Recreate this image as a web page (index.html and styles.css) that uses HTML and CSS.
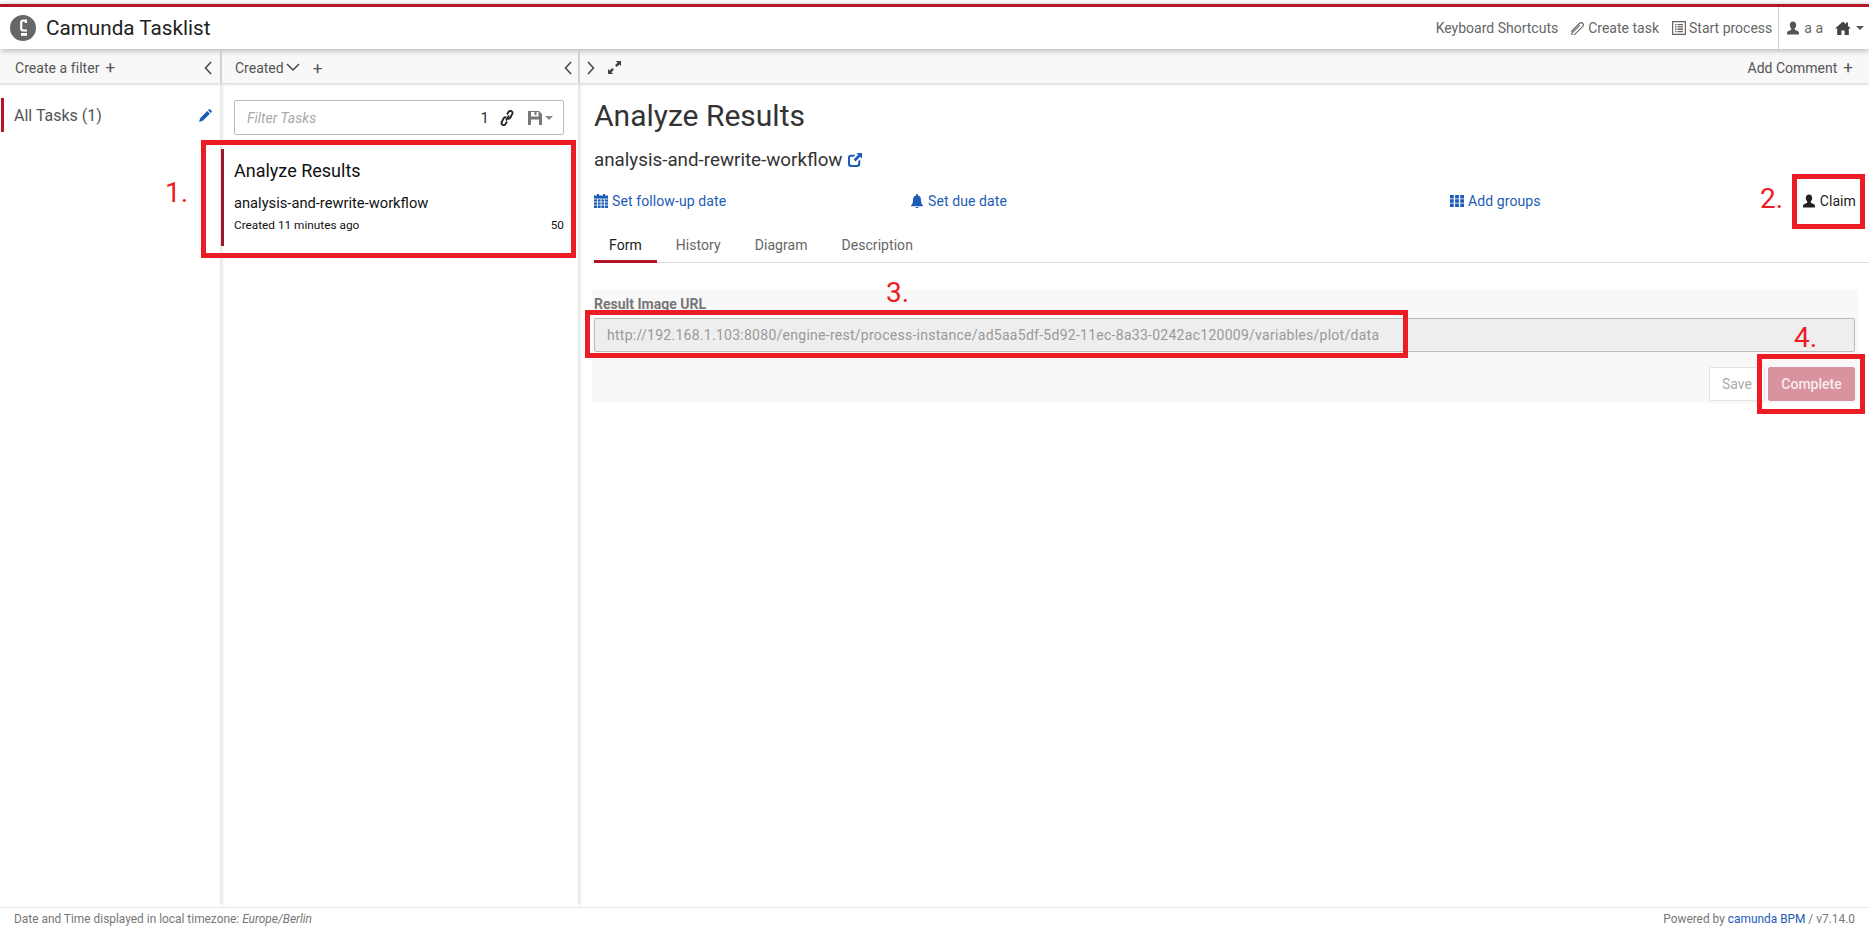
FILE: index.html
```html
<!doctype html>
<html>
	<head>
		<meta charset="utf-8">
		<title>Camunda Tasklist</title>
		<link rel="stylesheet" href="styles.css">
	</head>
	<body>
		<svg class="icon-defs" width="0" height="0">
			<symbol id="i-user" viewBox="0 0 14 14"><path d="M7 .5c2 0 3.200 1.500 3.200 3.600 0 1.400-.6 2.700-1.400 3.500v1.200l3.200 1.400c.8.400 1 1.200 1 3.300H1c0-2.100.2-2.900 1-3.300l3.200-1.400V7.600C4.400 6.800 3.800 5.500 3.800 4.100 3.800 2 5 .5 7 .5z"/></symbol>
			<symbol id="i-home" viewBox="0 0 16 14"><path d="M8 .5l3 2.700V1.500h2v3.500l3 2.600h-2.200V14H9.600V9.500H6.400V14H2.200V7.600H0z"/></symbol>
			<symbol id="i-clip" viewBox="0 0 14 14"><g transform="rotate(45 7 7)"><path d="M4.800 14.500V2.500a2.200 2.200 0 0 1 4.400 0v12a1.400 1.400 0 0 1-2.800 0V4" fill="none" stroke="currentColor" stroke-width="1.100"/></g></symbol>
			<symbol id="i-list" viewBox="0 0 14 14"><path fill-rule="evenodd" d="M0 0h14v14H0zM1.200 1.200v11.600h11.600V1.200zM3 3h1.500v1.300H3zm2.500 0H11v1.300H5.500zM3 5.300h1.500v1.300H3zm2.500 0H11v1.300H5.500zM3 7.600h1.500v1.300H3zm2.500 0H11v1.300H5.500zM3 9.900h1.500v1.300H3zm2.500 0H11v1.300H5.500z"/></symbol>
			<symbol id="i-pencil" viewBox="0 0 14 14"><path d="M10.700.8l2.500 2.500-1.300 1.300-2.500-2.500zM8.600 2.900l2.500 2.500-6.600 6.600-3.500 1 1-3.500z"/></symbol>
			<symbol id="i-link" viewBox="0 0 14 16"><path d="M6 10.500l3-5" fill="none" stroke="#222" stroke-width="1.800"/><path d="M7 4.500l1.500-2.500c.8-1.200 2-1.400 3-.8s1.300 1.800.6 3L10.500 7.500c-.7 1.200-1.800 1.400-2.800.9M7 11.500l-1.500 2.500c-.8 1.200-2 1.400-3 .8s-1.300-1.800-.6-3L3.500 8.500c.7-1.200 1.800-1.400 2.800-.9" fill="none" stroke="#222" stroke-width="1.800"/></symbol>
			<symbol id="i-save" viewBox="0 0 14 14"><path fill-rule="evenodd" d="M0 0h11l3 3v11H0zM3 1v4.500h7.500V1h-2v3H6.500V1zM3 8.500V14h8V8.500z"/></symbol>
			<symbol id="i-share" viewBox="0 0 14 14"><path d="M8.500 0H14v5.500l-1.800-1.800L7.500 8.400 5.600 6.500l4.700-4.700z"/><path d="M3 1.800h4.500L5.700 3.800H3.400c-.9 0-1.400.5-1.400 1.400v5.400c0 .9.500 1.400 1.400 1.400h5.400c.9 0 1.400-.5 1.400-1.400V8.300l2-2V11c0 1.900-1.100 3-3 3H3c-1.900 0-3-1.100-3-3V4.800c0-1.900 1.100-3 3-3z"/></symbol>
			<symbol id="i-cal" viewBox="0 0 14 14"><path d="M3 0h2v1.500h4V0h2v1.500h3V14H0V1.500h3z"/><path d="M0 5h14M0 8h14M0 11h14M3.500 5v9M7 5v9M10.500 5v9" fill="none" stroke="#fff" stroke-width=".8"/></symbol>
			<symbol id="i-bell" viewBox="0 0 14 14"><path d="M7 0c.6 0 1 .4 1 1v.6c2 .4 3 2 3 4.400 0 3 .8 4.500 2 5.500v.8H1v-.8c1.200-1 2-2.500 2-5.500 0-2.400 1-4 3-4.400V1c0-.6.400-1 1-1zM5.500 13h3c0 .7-.6 1-1.500 1s-1.500-.3-1.500-1z"/></symbol>
			<symbol id="i-th" viewBox="0 0 14 14"><path d="M0 1h3.800v3.400H0zM5.100 1h3.800v3.400H5.100zM10.200 1H14v3.400h-3.800zM0 5.300h3.800v3.400H0zM5.100 5.300h3.800v3.400H5.100zM10.200 5.300H14v3.400h-3.800zM0 9.600h3.800V13H0zM5.100 9.600h3.800V13H5.100zM10.200 9.600H14V13h-3.800z"/></symbol>
			<symbol id="i-resize" viewBox="0 0 14 14"><path d="M8.500 0H14v5.500l-1.800-1.800-2.700 2.700-1.900-1.900 2.700-2.700zM0 14V8.500l1.800 1.800 2.700-2.700 1.900 1.900-2.700 2.700L5.500 14z"/></symbol>
		</svg>

		<div class="app">
			<header class="topbar">
				<div class="brand">
					<svg class="logo" viewBox="0 0 26 26"><circle cx="13" cy="13" r="13" fill="#666"/><path d="M17 5.500h-3.500c-1.500 0-2.300.7-2.300 2v6c0 1.300.8 2 2.300 2H17M15.800 5.500v2.500" fill="none" stroke="#fff" stroke-width="2.200"/><rect x="11" y="18" width="6" height="2.800" fill="#fff"/></svg>
					<span class="brand-name">Camunda Tasklist</span>
				</div>
				<nav class="topnav">
					<a class="nav-shortcuts">Keyboard Shortcuts</a>
					<a class="nav-create"><svg class="ico"><use href="#i-clip"/></svg>Create task</a>
					<a class="nav-start"><svg class="ico"><use href="#i-list"/></svg>Start process</a>
					<a class="nav-user"><svg class="ico"><use href="#i-user"/></svg>a a</a>
					<a class="nav-home"><svg class="ico ico-home"><use href="#i-home"/></svg><i class="caret"></i></a>
				</nav>
			</header>

			<main class="columns">
				<section class="col col-filters">
					<div class="toolbar">
						<span class="filter-add">Create a filter<b class="plus">+</b></span>
						<svg class="chev" viewBox="0 0 8 14"><path d="M7 1L1.500 7 7 13"/></svg>
					</div>
					<div class="filter-item">
						<span>All Tasks (1)</span>
						<svg class="ico ico-pencil"><use href="#i-pencil"/></svg>
					</div>
				</section>

				<section class="col col-list">
					<div class="toolbar">
						<span class="sort">Created<svg class="sort-chev" viewBox="0 0 14 9"><path d="M1 1l6 6 6-6"/></svg><b class="plus plus-sort">+</b></span>
						<svg class="chev" viewBox="0 0 8 14"><path d="M7 1L1.500 7 7 13"/></svg>
					</div>
					<div class="search">
						<span class="search-ph">Filter Tasks</span>
						<span class="search-count">1</span>
						<svg class="ico ico-link"><use href="#i-link"/></svg>
						<svg class="ico ico-save"><use href="#i-save"/></svg>
						<i class="caret caret-save"></i>
					</div>
					<article class="task">
						<h3>Analyze Results</h3>
						<p class="task-proc">analysis-and-rewrite-workflow</p>
						<p class="task-meta"><span>Created 11 minutes ago</span><span>50</span></p>
					</article>
				</section>

				<section class="col col-detail">
					<div class="toolbar">
						<span class="detail-tools">
							<svg class="chev" viewBox="0 0 8 14"><path d="M1 1l5.500 6L1 13"/></svg>
							<svg class="ico ico-resize"><use href="#i-resize"/></svg>
						</span>
						<span class="add-comment">Add Comment<b class="plus">+</b></span>
					</div>
					<div class="detail">
						<h1>Analyze Results</h1>
						<h2>analysis-and-rewrite-workflow<svg class="ico ico-share"><use href="#i-share"/></svg></h2>
						<div class="actions">
							<a class="act act-follow"><svg class="ico"><use href="#i-cal"/></svg>Set follow-up date</a>
							<a class="act act-due"><svg class="ico"><use href="#i-bell"/></svg>Set due date</a>
							<a class="act act-groups"><svg class="ico"><use href="#i-th"/></svg>Add groups</a>
							<a class="claim"><svg class="ico"><use href="#i-user"/></svg>Claim</a>
						</div>
						<ul class="tabs">
							<li class="current">Form</li>
							<li>History</li>
							<li>Diagram</li>
							<li>Description</li>
						</ul>
						<form class="form">
							<label>Result Image URL</label>
							<div class="field">http://192.168.1.103:8080/engine-rest/process-instance/ad5aa5df-5d92-11ec-8a33-0242ac120009/variables/plot/data</div>
							<div class="form-btns">
								<span class="btn btn-save">Save</span>
								<span class="btn btn-complete">Complete</span>
							</div>
						</form>
					</div>
				</section>
			</main>

			<footer class="footer">
				<span>Date and Time displayed in local timezone: <em>Europe/Berlin</em></span>
				<span>Powered by <a>camunda BPM</a> / v7.14.0</span>
			</footer>
		</div>

		<!-- numbered marks drawn over the screenshot -->
		<div class="mark mark-1"></div>
		<div class="mark mark-2"></div>
		<div class="mark mark-3"></div>
		<div class="mark mark-4"></div>
		<span class="num num-1">1.</span>
		<span class="num num-2">2.</span>
		<span class="num num-3">3.</span>
		<span class="num num-4">4.</span>
	</body>
</html>
```

FILE: styles.css
```css
* {
	margin: 0;
	padding: 0;
	box-sizing: border-box;
}
html, body {
	height: 100%;
	overflow: hidden;
}
body {
	position: relative;
	background: white;
	color: #333;
	font-family: "Roboto", "Liberation Sans", sans-serif;
	font-size: 14px;
}
.icon-defs {
	position: absolute;
}
.ico {
	display: inline-block;
	width: 14px;
	height: 14px;
	fill: currentColor;
	flex: none;
}
.app {
	display: flex;
	flex-direction: column;
	height: 930px;
}

/* top bar */
.topbar {
	display: flex;
	justify-content: space-between;
	align-items: stretch;
	height: 45px;
	margin-top: 4px;
	border-top: 3px solid #b5152b;
	background: white;
	box-shadow: 0 1px 6px rgba(0, 0, 0, 0.35);
	position: relative;
	z-index: 3;
}
.brand {
	display: flex;
	align-items: center;
	padding-left: 10px;
}
.logo {
	width: 26px;
	height: 26px;
}
.brand-name {
	margin-left: 10px;
	font-size: 20.7px;
	color: #222;
}
.topnav {
	display: flex;
	align-items: center;
	color: #666;
	padding-right: 5px;
}
.topnav a {
	display: flex;
	align-items: center;
	gap: 3px;
}
.nav-create {
	margin-left: 13px;
}
.nav-start {
	margin-left: 13px;
}
.nav-user {
	align-self: stretch;
	margin-left: 6px;
	padding-left: 7px;
	border-left: 1px solid #ccc;
}
.topnav .nav-user {
	gap: 4px;
}
.nav-user .ico {
	color: #555;
}
.nav-home {
	margin-left: 12px;
	color: #444;
}
.ico-home {
	width: 16px;
}
.caret {
	display: inline-block;
	margin-left: 2px;
	border-top: 4px solid #555;
	border-left: 4px solid transparent;
	border-right: 4px solid transparent;
}

/* three columns */
.columns {
	flex: 1;
	display: flex;
	min-height: 0;
}
.col {
	display: flex;
	flex-direction: column;
	box-shadow: 4px 0 4px -2px rgba(0, 0, 0, 0.12);
}
.col-filters {
	width: 220px;
}
.col-list {
	width: 356px;
	margin-left: 2px;
}
.col-detail {
	flex: 1;
	margin-left: 2px;
	box-shadow: none;
}
.toolbar {
	display: flex;
	justify-content: space-between;
	align-items: center;
	height: 31px;
	margin-top: 3px;
	padding: 0 8px 0 14px;
	background: #f8f8f8;
	box-shadow: 0 1px 3px rgba(0, 0, 0, 0.2);
	color: #555;
	font-size: 14px;
}
.filter-add {
	margin-left: 1px;
	letter-spacing: 0.05px;
}
.plus {
	margin-left: 6px;
	font-weight: 400;
	font-size: 17px;
	line-height: 14px;
}
.chev {
	width: 8px;
	height: 14px;
	fill: none;
	stroke: #444;
	stroke-width: 1.5;
}
.col-list .toolbar {
	padding: 0 6px 0 13px;
}
.sort {
	display: flex;
	align-items: center;
}
.sort-chev {
	width: 14px;
	height: 9px;
	margin-left: 2px;
	fill: none;
	stroke: #444;
	stroke-width: 1.5;
}
.plus-sort {
	margin-left: 13px;
}

.filter-item {
	display: flex;
	justify-content: space-between;
	align-items: center;
	height: 34px;
	margin: 15px 0 0 1px;
	padding: 0 7px 0 10px;
	border-left: 3px solid #b5152b;
	font-size: 16px;
	color: #555;
}
.ico-pencil {
	width: 15px;
	height: 15px;
	color: #1c5cb5;
}

.search {
	display: flex;
	align-items: center;
	height: 35px;
	margin: 17px 14px 0 12px;
	padding: 0 10px 0 12px;
	border: 1px solid #bbb;
	border-radius: 2px;
}
.search-ph {
	flex: 1;
	font-style: italic;
	color: #aaa;
}
.search-count {
	font-size: 15px;
}
.ico-link {
	width: 14px;
	height: 16px;
	margin-left: 11px;
}
.ico-save {
	margin-left: 14px;
	color: #777;
}
.caret-save {
	margin-left: 3px;
	border-top-color: #888;
}

.task {
	height: 97px;
	margin: 14px 14px 0 -1px;
	padding: 9px 0 0 10px;
	border-left: 3px solid #9d1a2d;
	color: #111;
}
.task h3 {
	font-size: 18px;
	font-weight: 400;
	line-height: 26px;
}
.task-proc {
	margin-top: 9px;
	font-size: 14.7px;
	line-height: 20px;
}
.task-meta {
	display: flex;
	justify-content: space-between;
	margin-top: 4px;
	font-size: 11.8px;
	line-height: 16px;
}

/* detail pane */
.detail {
	padding: 0 11px 0 14px;
}
.detail-tools {
	display: flex;
	align-items: center;
	gap: 13px;
}
.col-detail .toolbar {
	padding: 0 16px 0 7px;
}
.ico-resize {
	width: 13px;
	height: 13px;
	color: #444;
}
.add-comment {
	color: #555;
}
.detail h1 {
	margin-top: 15px;
	font-size: 30px;
	font-weight: 400;
	line-height: 36px;
	color: #333;
}
.detail h2 {
	display: flex;
	align-items: center;
	margin-top: 14px;
	font-size: 18.8px;
	font-weight: 400;
	line-height: 24px;
}
.ico-share {
	margin-left: 6px;
	color: #1c5cb5;
}
.actions {
	display: flex;
	align-items: center;
	margin-top: 17px;
	height: 24px;
	color: #1c5cb5;
	letter-spacing: 0.1px;
}
.act {
	display: flex;
	align-items: center;
	gap: 4px;
}
.act-follow {
	width: 316px;
}
.act-due {
	width: 540px;
}
.act-groups {
	flex: 1;
}
.claim {
	display: flex;
	align-items: center;
	gap: 4px;
	margin-right: 2px;
	color: #222;
}
.tabs {
	display: flex;
	height: 34px;
	margin: 16px -11px 0 0;
	list-style: none;
	border-bottom: 1px solid #ddd;
	color: #666;
	letter-spacing: 0.05px;
}
.tabs li {
	padding: 0 15px;
	margin-right: 4px;
	line-height: 32px;
}
.tabs li.current {
	color: #222;
	border-bottom: 3px solid #b5152b;
	height: 34px;
}
.form {
	margin: 27px 0 0 -2px;
	height: 113px;
	padding: 5px 3px 0 2px;
	background: #f8f8f8;
}
.form label {
	display: block;
	font-size: 14px;
	font-weight: 700;
	line-height: 18px;
	color: #777;
}
.field {
	height: 34px;
	margin-top: 5px;
	padding: 0 12px;
	border: 1px solid #bbb;
	border-radius: 2px;
	background: #eee;
	color: #999;
	line-height: 32px;
	letter-spacing: 0.27px;
}
.form-btns {
	display: flex;
	justify-content: flex-end;
	gap: 3px;
	margin-top: 15px;
}
.btn {
	height: 34px;
	line-height: 32px;
	text-align: center;
	border: 1px solid transparent;
	border-radius: 2px;
}
.btn-save {
	width: 56px;
	border-color: #e4e4e4;
	background: white;
	color: #aaa;
}
.btn-complete {
	width: 87px;
	background: #d9939e;
	border-color: #d9939e;
	color: #f8eaec;
	font-weight: 500;
}

.footer {
	display: flex;
	justify-content: space-between;
	align-items: center;
	height: 23px;
	padding: 0 14px;
	border-top: 1px solid #e8e8e8;
	background: white;
	color: #777;
	font-size: 11.9px;
	position: relative;
	z-index: 2;
}
.footer a {
	color: #1c5cb5;
}

/* red annotation marks */
.mark {
	position: absolute;
	border: 5px solid #ed1c24;
}
.mark-1 {
	left: 201px;
	top: 140px;
	width: 375px;
	height: 118px;
}
.mark-2 {
	left: 1792px;
	top: 174px;
	width: 73px;
	height: 55px;
}
.mark-3 {
	left: 585px;
	top: 310px;
	width: 823px;
	height: 48px;
}
.mark-4 {
	left: 1757px;
	top: 354px;
	width: 108px;
	height: 60px;
}
.num {
	position: absolute;
	font-size: 28px;
	line-height: 32px;
	color: #ed1c24;
}
.num-1 {
	left: 165px;
	top: 177px;
}
.num-2 {
	left: 1760px;
	top: 183px;
}
.num-3 {
	left: 886px;
	top: 277px;
}
.num-4 {
	left: 1794px;
	top: 322px;
}
```
